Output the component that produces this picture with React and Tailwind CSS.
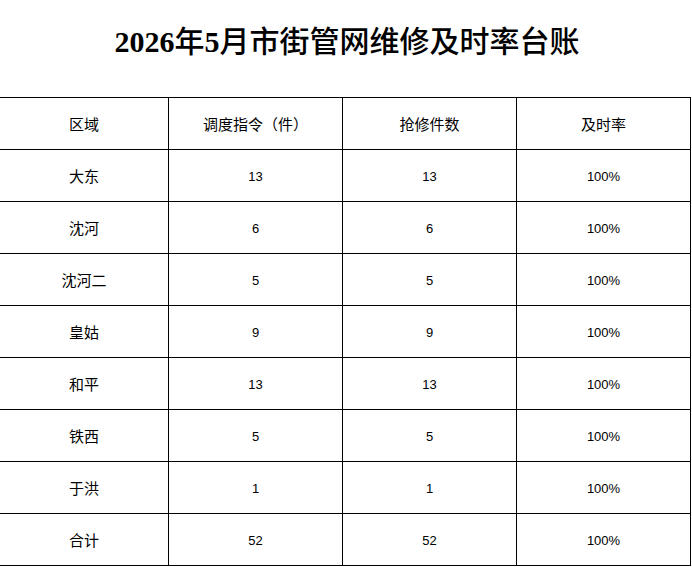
import React from "react";

const rows = [
  ["大东", "13", "13", "100%"],
  ["沈河", "6", "6", "100%"],
  ["沈河二", "5", "5", "100%"],
  ["皇姑", "9", "9", "100%"],
  ["和平", "13", "13", "100%"],
  ["铁西", "5", "5", "100%"],
  ["于洪", "1", "1", "100%"],
  ["合计", "52", "52", "100%"],
];

const cjk = { fontFamily: '"Noto Sans CJK SC", sans-serif' };
const num = { fontFamily: '"Liberation Sans", "Noto Sans CJK SC", sans-serif' };

export default function App() {
  return (
    <div className="w-[692px] h-[567px] bg-white overflow-hidden text-black">
      <div className="h-[97px] flex items-center justify-center pb-[13px] pl-[2px]">
        <h1
          className="text-[30px] leading-none font-medium"
          style={{ fontFamily: '"Liberation Serif", "Noto Sans CJK SC", serif' }}
        >
          <span className="font-bold">2026</span>年<span className="font-bold">5</span>月市街管网维修及时率台账
        </h1>
      </div>
      <div className="w-[691px] border-t-[1.5px] border-black">
        <div className="grid grid-cols-[169px_174px_174px_174px]">
          {["区域", "调度指令（件）", "抢修件数", "及时率"].map((h, i) => (
            <div
              key={i}
              className="h-[52px] flex items-center justify-center border-b-[1.5px] border-r-[1.5px] border-black text-[15px] pt-[2px]"
              style={cjk}
            >
              {h}
            </div>
          ))}
          {rows.map((r, ri) =>
            r.map((c, ci) => (
              <div
                key={ri + "-" + ci}
                className={
                  "h-[52px] flex items-center justify-center border-b-[1.5px] border-r-[1.5px] border-black pt-[2px] " +
                  (ci === 0 ? "text-[15px]" : "text-[13px]")
                }
                style={ci === 0 ? cjk : num}
              >
                {c}
              </div>
            ))
          )}
        </div>
      </div>
    </div>
  );
}
